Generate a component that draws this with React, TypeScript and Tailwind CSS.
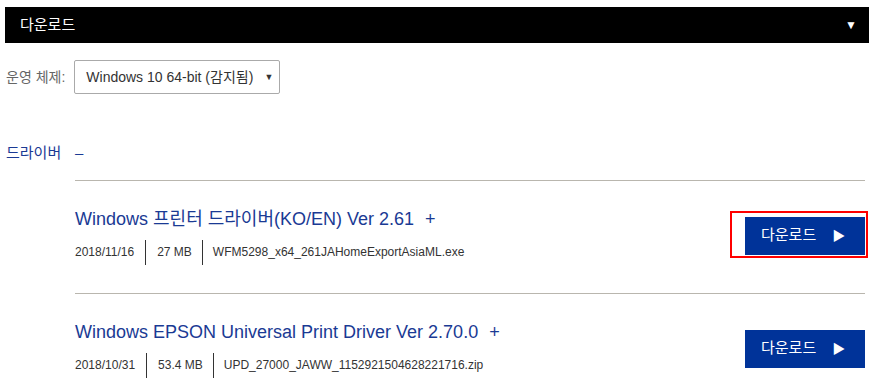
const FONT = 'font-["Liberation_Sans","Noto_Sans_CJK_KR",sans-serif]';

const DRIVERS = [
    {
        title: "Windows 프린터 드라이버(KO/EN) Ver 2.61",
        date: "2018/11/16",
        size: "27 MB",
        file: "WFM5298_x64_261JAHomeExportAsiaML.exe",
        highlight: true,
    },
    {
        title: "Windows EPSON Universal Print Driver Ver 2.70.0",
        date: "2018/10/31",
        size: "53.4 MB",
        file: "UPD_27000_JAWW_1152921504628221716.zip",
        highlight: false,
    },
];

function DownloadButton({ highlight }: { highlight: boolean }) {
    return (
        <div className="relative shrink-0">
            {highlight && (
                <div className="absolute -left-[15px] -right-[3px] -top-[6px] -bottom-[3px] border-2 border-[#ff0000] pointer-events-none" />
            )}
            <button className="flex items-center w-[120px] h-[38px] bg-[#003399] text-white text-[15px] pl-[16px]">
                <span>다운로드</span>
                <span className="ml-[16px] text-[13px] leading-none">▶</span>
            </button>
        </div>
    );
}

export default function App() {
    return (
        <div className={`${FONT} w-[874px] h-[391px] bg-white overflow-hidden`}>
            <div className="mx-[5px] mt-[7px] h-[36px] bg-black flex items-center justify-between pl-[15px] pr-[12px]">
                <span className="text-white text-[15px]">다운로드</span>
                <span className="text-white text-[12px] leading-none">▼</span>
            </div>

            <div className="flex items-center mt-[17px] pl-[6px]">
                <span className="text-[#666] text-[14px]">운영 체제:</span>
                <div className="ml-[9px] w-[206px] h-[34px] border border-[#aaa] rounded-[2px] flex items-center justify-between pl-[11px] pr-[6px]">
                    <span className="text-[#333] text-[14px]">Windows 10 64-bit (감지됨)</span>
                    <span className="text-[#333] text-[9px] leading-none">▼</span>
                </div>
            </div>

            <div className="flex items-center mt-[48px] pl-[6px] text-[15px] text-[#1a3a94]">
                <span className="w-[69px]">드라이버</span>
                <span>–</span>
            </div>

            <div className="ml-[75px] mr-[9px] mt-[15px]">
                {DRIVERS.map((d) => (
                    <div key={d.file} className="border-t border-[#b9b6ae] flex items-center justify-between pt-[26px] pb-[28px]">
                        <div>
                            <div className="text-[18px] leading-[24px] text-[#1a3a94]">
                                {d.title}
                                <span className="ml-[11px]">+</span>
                            </div>
                            <div className="flex items-center mt-[9px] text-[12px] text-[#333]">
                                <span>{d.date}</span>
                                <span className="w-px h-[25px] bg-[#333] mx-[11px]" />
                                <span>{d.size}</span>
                                <span className="w-px h-[25px] bg-[#333] mx-[10px]" />
                                <span>{d.file}</span>
                            </div>
                        </div>
                        <DownloadButton highlight={d.highlight} />
                    </div>
                ))}
            </div>
        </div>
    );
}
